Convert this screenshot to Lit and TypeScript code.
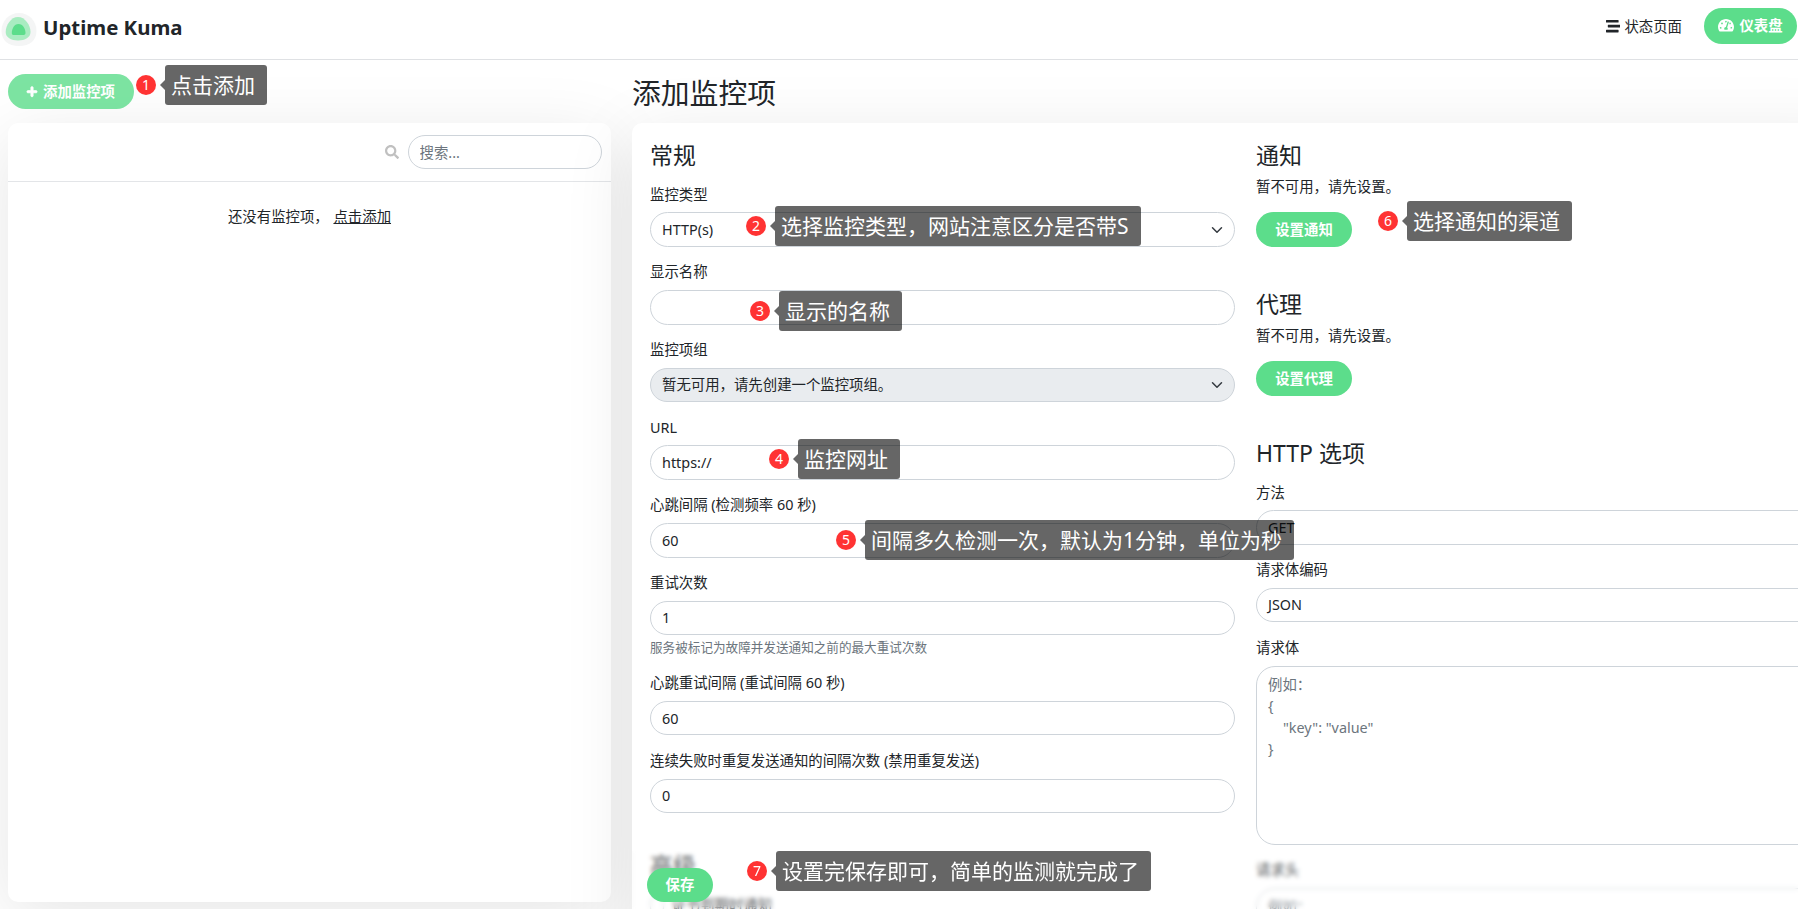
import { LitElement, html, css } from "lit";
import { customElement } from "lit/decorators.js";

const ICON = {
  plus: "M416 208H272V64c0-17.67-14.33-32-32-32h-32c-17.67 0-32 14.33-32 32v144H32c-17.67 0-32 14.33-32 32v32c0 17.67 14.33 32 32 32h144v144c0 17.67 14.33 32 32 32h32c17.67 0 32-14.33 32-32V304h144c17.67 0 32-14.33 32-32v-32c0-17.67-14.33-32-32-32z",
  search: "M505 442.7L405.3 343c-4.5-4.5-10.6-7-17-7H372c27.6-35.3 44-79.7 44-128C416 93.1 322.9 0 208 0S0 93.1 0 208s93.1 208 208 208c48.3 0 92.7-16.4 128-44v16.3c0 6.4 2.5 12.5 7 17l99.7 99.7c9.4 9.4 24.6 9.4 33.9 0l28.3-28.3c9.4-9.4 9.4-24.6.1-34zM208 336c-70.7 0-128-57.2-128-128 0-70.7 57.2-128 128-128 70.7 0 128 57.2 128 128 0 70.7-57.2 128-128 128z",
  stream: "M16 128h416c8.84 0 16-7.16 16-16V48c0-8.84-7.16-16-16-16H16C7.16 32 0 39.16 0 48v64c0 8.84 7.16 16 16 16zm480 80H80c-8.84 0-16 7.16-16 16v64c0 8.84 7.16 16 16 16h416c8.84 0 16-7.16 16-16v-64c0-8.84-7.16-16-16-16zm-64 176H16c-8.84 0-16 7.16-16 16v64c0 8.84 7.16 16 16 16h416c8.84 0 16-7.16 16-16v-64c0-8.84-7.16-16-16-16z",
  gauge: "M288 32C128.94 32 0 160.94 0 320c0 52.8 14.25 102.26 39.06 144.8 5.61 9.62 16.3 15.2 27.44 15.2h443c11.14 0 21.83-5.58 27.44-15.2C561.75 422.26 576 372.8 576 320c0-159.06-128.94-288-288-288zm0 64c14.71 0 26.58 10.13 30.32 23.65-1.11 2.26-2.64 4.23-3.45 6.67l-9.22 27.67c-5.13 3.49-10.97 6.01-17.64 6.01-17.67 0-32-14.33-32-32S270.33 96 288 96zM96 384c-17.67 0-32-14.33-32-32s14.33-32 32-32 32 14.33 32 32-14.33 32-32 32zm48-160c-17.67 0-32-14.33-32-32s14.33-32 32-32 32 14.33 32 32-14.33 32-32 32zm246.77-72.41l-61.33 184C343.13 347.33 352 364.54 352 384c0 11.72-3.38 22.55-8.88 32H232.88c-5.5-9.45-8.88-20.28-8.88-32 0-33.94 26.5-61.43 59.9-63.59l61.34-184.01c4.17-12.56 17.73-19.45 30.36-15.17 12.57 4.19 19.35 17.79 15.17 30.36zm14.66 57.2l15.52-46.55c3.47-1.29 7.13-2.23 11.05-2.23 17.67 0 32 14.33 32 32s-14.33 32-32 32c-11.38-.01-20.89-6.28-26.57-15.22zM480 384c-17.67 0-32-14.33-32-32s14.33-32 32-32 32 14.33 32 32-14.33 32-32 32z",
};

const NOTES: { n: number; text: string; x: number; y: number }[] = [
  { n: 1, text: "点击添加", x: 165, y: 65 },
  { n: 2, text: "选择监控类型，网站注意区分是否带S", x: 775, y: 206 },
  { n: 3, text: "显示的名称", x: 779, y: 291 },
  { n: 4, text: "监控网址", x: 798, y: 439 },
  { n: 5, text: "间隔多久检测一次，默认为1分钟，单位为秒", x: 865, y: 520 },
  { n: 6, text: "选择通知的渠道", x: 1407, y: 201 },
  { n: 7, text: "设置完保存即可，简单的监测就完成了", x: 776, y: 851 },
];

const chevron = html`<svg class="chevron" viewBox="0 0 16 16"><path d="M2 5l6 6 6-6" fill="none" stroke="#343a40" stroke-width="2" stroke-linecap="round" stroke-linejoin="round"></path></svg>`;

@customElement("app-root")
export class AppRoot extends LitElement {
  static styles = css`
    :host {
      display: block;
      position: relative;
      width: 1798px;
      height: 909px;
      overflow: hidden;
      background: #fff;
      color: #212529;
      font-family: "Noto Sans", "Noto Sans CJK SC", sans-serif;
      font-size: 14.4px;
      line-height: 21.6px;
    }
    * { box-sizing: border-box; }
    svg { display: block; fill: currentColor; }

    .top {
      position: relative;
      z-index: 2;
      height: 60px;
      background: #fff;
      border-bottom: 1px solid #dfe1e4;
      display: flex;
      align-items: center;
      padding: 0 1px 0 1px;
    }
    .logo { width: 36px; height: 33px; }
    .brand { margin-left: 6px; font-size: 20.4px; font-weight: 700; line-height: 30px; margin-top: -6px; }
    .spacer { flex: 1; }
    .status { display: flex; align-items: center; gap: 4px; margin-right: 22px; margin-top: -6px; }
    .status svg { width: 14.4px; height: 14.4px; }
    .btn {
      display: inline-flex;
      align-items: center;
      justify-content: center;
      height: 35px;
      border-radius: 18px;
      background: #5cdd8b;
      color: #fff;
      font-weight: 600;
      white-space: nowrap;
    }
    .dash { width: 93px; height: 36px; gap: 5px; margin-top: -8px; }
    .dash svg { width: 16px; height: 14.4px; }

    .main {
      display: grid;
      grid-template-columns: 603px 1227px;
      column-gap: 21px;
      padding: 14px 0 0 8px;
    }
    .add { width: 126px; gap: 6px; opacity: 0.8; margin-bottom: 14px; }
    .add svg { width: 10px; height: 11.4px; stroke: currentColor; stroke-width: 40; overflow: visible; }

    .shadow-box {
      background: #fff;
      border-radius: 10px;
      box-shadow: 0 15px 70px rgba(0, 0, 0, 0.1);
    }
    .list { height: 779px; }
    .list-head {
      height: 59px;
      border-bottom: 1px solid #e3e5e8;
      display: flex;
      justify-content: flex-end;
      align-items: flex-start;
      padding: 12px 9.5px 0 0;
      gap: 9px;
    }
    .list-head svg { width: 14px; height: 14px; color: #c0c0c0; margin-top: 9.5px; }
    .empty { text-align: center; padding-top: 24px; }
    .empty a { color: #212529; text-decoration: underline; margin-left: 1px; }

    h1 {
      margin: 2px 0 13px;
      font-size: 28.8px;
      font-weight: 400;
      line-height: 34px;
    }
    h2 {
      margin: 0 0 14px;
      font-size: 23px;
      font-weight: 400;
      line-height: 27.6px;
    }
    h2.tight { margin-bottom: 6.4px; }
    .form {
      display: grid;
      grid-template-columns: 585px 585px;
      column-gap: 21px;
      padding: 19px 18px 60px;
    }
    .group { margin-bottom: 14.4px; }
    label { display: block; margin-bottom: 7.2px; }
    .field {
      display: flex;
      align-items: center;
      justify-content: space-between;
      width: 100%;
      height: 34.5px;
      padding: 0 11px;
      border: 1px solid #ced4da;
      border-radius: 17.5px;
      background: #fff;
      color: #212529;
      font: inherit;
      outline: none;
    }
    input.search { width: 194px; height: 34px; }
    .field::placeholder, textarea::placeholder { color: #6c757d; opacity: 1; }
    .field.off { background: #e9ecef; }
    .chevron { width: 12px; height: 12px; flex: none; }
    .help { margin-top: 3.6px; font-size: 12.6px; line-height: 18.9px; color: #6c757d; }
    textarea.field {
      display: block;
      height: 179px;
      padding: 7px 11px;
      border-radius: 19px;
      resize: none;
    }
    textarea.field.short { height: 120px; }
    .advanced { margin-top: 39px; }
    .check { display: flex; align-items: center; gap: 7px; }
    .box { width: 14.4px; height: 14.4px; border: 1px solid #ced4da; border-radius: 4px; }
    p { margin: 0 0 14.4px; }
    .set { width: 96px; }
    .block { margin-bottom: 44px; }

    .bar {
      position: absolute;
      z-index: 3;
      left: 632px;
      right: 0;
      top: 851px;
      bottom: 0;
      padding: 17px 0 0 15px;
      backdrop-filter: blur(2px);
      background: rgba(255, 255, 255, 0.25);
    }
    .save { width: 66px; height: 34px; }

    .note {
      position: absolute;
      z-index: 5;
      display: flex;
      align-items: center;
      gap: 9px;
    }
    .dot {
      width: 20px;
      height: 20px;
      border-radius: 50%;
      background: #ff3333;
      color: #fff;
      font-size: 14px;
      line-height: 20px;
      text-align: center;
    }
    .tip {
      position: relative;
      height: 40px;
      padding: 0 12px 0 6px;
      border-radius: 3px;
      background: rgba(0, 0, 0, 0.6);
      color: #fff;
      font-size: 21px;
      line-height: 40px;
      white-space: nowrap;
    }
    .tip::before {
      content: "";
      position: absolute;
      left: -5px;
      top: 15px;
      border-style: solid;
      border-width: 5px 5px 5px 0;
      border-color: transparent rgba(0, 0, 0, 0.6) transparent transparent;
    }
  `;

  private select(label: string, value: string, off = false) {
    return html`<div class="group"><label>${label}</label>
      <div class="field ${off ? "off" : ""}"><span>${value}</span>${chevron}</div></div>`;
  }

  private input(label: string, value: string) {
    return html`<div class="group"><label>${label}</label>
      <input class="field" .value=${value} /></div>`;
  }

  render() {
    return html`
      <header class="top">
        <svg class="logo" viewBox="0 0 36 33">
          <path fill="#f4f5f5" d="M18 0C28 0 35.5 8 35.5 18C35.5 27 29 33 18 33C7 33 .5 27 .5 18C.5 8 8 0 18 0Z"></path>
          <path fill="#a9ecc1" d="M17 4C24 4 29.5 12 29.5 19C29.5 24.5 24 27.5 17 27.5C10 27.5 4.7 24.5 4.7 19C4.7 12 10 4 17 4Z"></path>
          <path fill="#5cdd8b" d="M17.5 11C22 11 24.5 16 24.5 20C24.5 21.5 23.5 22 22 22H13C11.5 22 10.8 21.5 10.8 20C10.8 16 13 11 17.5 11Z"></path>
        </svg>
        <span class="brand">Uptime Kuma</span>
        <span class="spacer"></span>
        <span class="status"><svg viewBox="0 0 512 512"><path d=${ICON.stream}></path></svg>状态页面</span>
        <span class="btn dash"><svg viewBox="0 0 576 512"><path d=${ICON.gauge}></path></svg>仪表盘</span>
      </header>

      <div class="main">
        <aside>
          <div class="btn add"><svg viewBox="0 0 448 512"><path d=${ICON.plus}></path></svg>添加监控项</div>
          <div class="shadow-box list">
            <div class="list-head">
              <svg viewBox="0 0 512 512"><path d=${ICON.search}></path></svg>
              <input class="field search" placeholder="搜索..." />
            </div>
            <div class="empty">还没有监控项， <a>点击添加</a></div>
          </div>
        </aside>
        <section>
          <h1>添加监控项</h1>
          <div class="shadow-box form">
            <div>
              <h2>常规</h2>
              ${this.select("监控类型", "HTTP(s)")}
              ${this.input("显示名称", "")}
              ${this.select("监控项组", "暂无可用，请先创建一个监控项组。", true)}
              ${this.input("URL", "https://")}
              ${this.input("心跳间隔 (检测频率 60 秒)", "60")}
              <div class="group"><label>重试次数</label>
                <input class="field" .value=${"1"} />
                <div class="help">服务被标记为故障并发送通知之前的最大重试次数</div></div>
              ${this.input("心跳重试间隔 (重试间隔 60 秒)", "60")}
              ${this.input("连续失败时重复发送通知的间隔次数 (禁用重复发送)", "0")}
              <h2 class="advanced">高级</h2>
              <div class="check"><span class="box"></span>证书到期时通知</div>
            </div>
            <div>
              <div class="block">
                <h2 class="tight">通知</h2>
                <p>暂不可用，请先设置。</p>
                <div class="btn set">设置通知</div>
              </div>
              <div class="block">
                <h2 class="tight">代理</h2>
                <p>暂不可用，请先设置。</p>
                <div class="btn set">设置代理</div>
              </div>
              <h2>HTTP 选项</h2>
              ${this.select("方法", "GET")}
              ${this.select("请求体编码", "JSON")}
              <div class="group"><label>请求体</label>
                <textarea class="field" placeholder=${'例如：\n{\n    "key": "value"\n}'}></textarea></div>
              <div class="group"><label>请求头</label>
                <textarea class="field short" placeholder="例如："></textarea></div>
            </div>
          </div>
        </section>
      </div>

      <div class="bar"><div class="btn save">保存</div></div>

      ${NOTES.map(
        (n) => html`<div class="note" style="left:${n.x - 29}px;top:${n.y}px">
          <span class="dot">${n.n}</span><span class="tip">${n.text}</span>
        </div>`
      )}
    `;
  }
}
